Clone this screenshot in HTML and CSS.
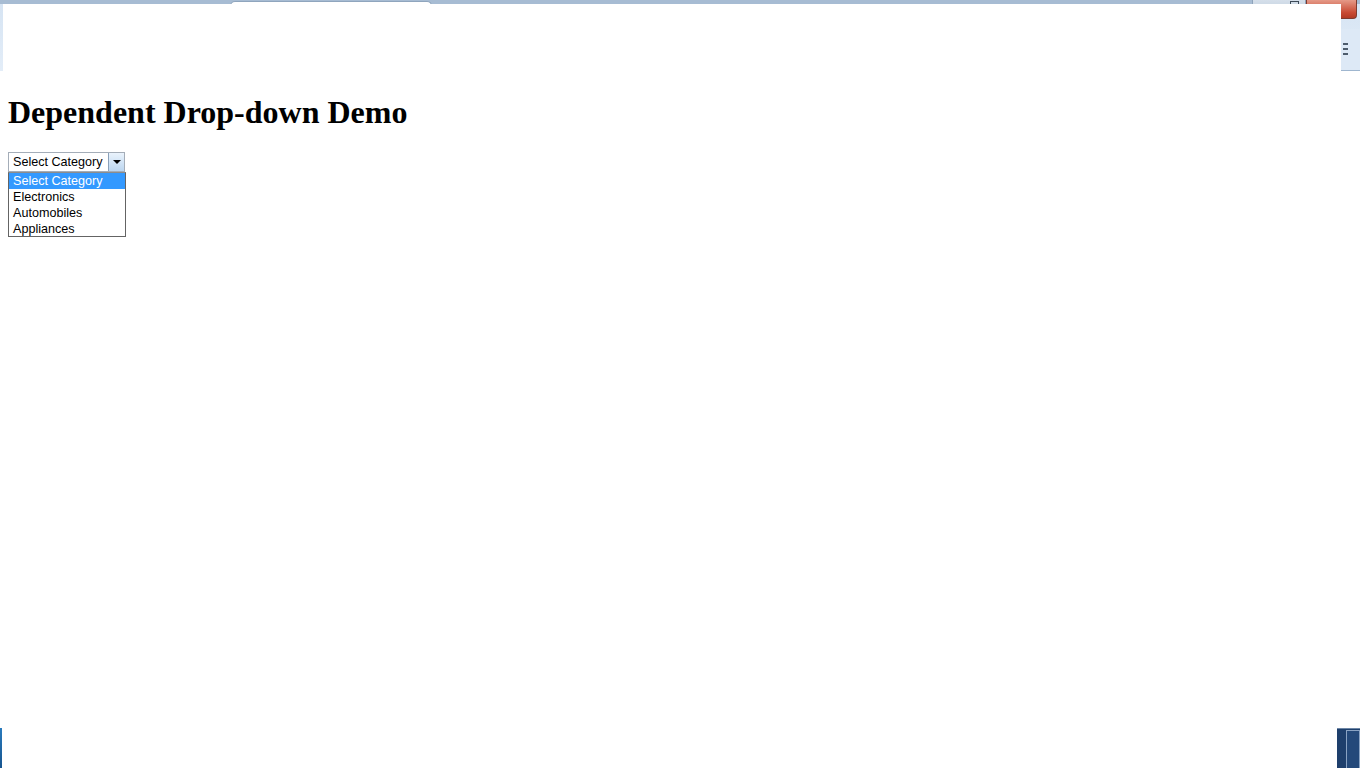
FILE: index.html
```html
<!DOCTYPE html>
<html lang="en">
<head>
  <meta charset="UTF-8">
  <title>Dependent Drop-down Demo</title>
  <link rel="stylesheet" href="styles.css">
</head>
<body>
  <div class="chrome">
    <div class="tab"></div>
    <div class="win-buttons">
      <div class="btn-max"><span class="box"></span></div>
      <div class="btn-close"></div>
    </div>
    <div class="toolbar"></div>
    <div class="side">
      <div class="menu-icon"><span></span><span></span><span></span></div>
    </div>
  </div>

  <div class="page">
    <h1>Dependent Drop-down Demo</h1>

    <div class="select-wrap">
      <div class="select">
        <span class="select-value">Select Category</span>
        <span class="select-arrow"></span>
      </div>
      <ul class="select-list">
        <li class="selected">Select Category</li>
        <li>Electronics</li>
        <li>Automobiles</li>
        <li>Appliances</li>
      </ul>
    </div>
  </div>

  <div class="taskbar-left"></div>
  <div class="taskbar-right"><span></span></div>
</body>
</html>
```

FILE: styles.css
```css
html, body {
  height: 100%;
}

body {
  margin: 0;
  background-color: #fff;
  font-family: 'Liberation Serif', 'Times New Roman', serif;
  overflow: hidden;
  position: relative;
}

.chrome {
  position: relative;
  height: 71px;
  background: linear-gradient(to bottom, #a7bcd3 0, #a7bcd3 4px, #d6e4f3 4px, #e3edf8 100%);
}

.toolbar {
  position: absolute;
  left: 3px;
  top: 4px;
  width: 1338px;
  height: 67px;
  background-color: #fff;
}

.tab {
  position: absolute;
  left: 230px;
  top: 1px;
  width: 200px;
  height: 6px;
  background-color: #fff;
  border: 1px solid #8fa5bd;
  border-bottom: none;
  border-radius: 5px 5px 0 0;
}

.win-buttons {
  position: absolute;
  right: 3px;
  top: 0;
  display: flex;
}

.btn-max {
  position: relative;
  width: 52px;
  height: 18px;
  background: linear-gradient(to bottom, #d5dfea, #b9c9da);
  border: 1px solid #8ea3ba;
  border-top: none;
  border-radius: 0 0 0 3px;
}

.btn-max .box {
  position: absolute;
  left: 37px;
  top: 1px;
  width: 7px;
  height: 6px;
  border: 1px solid #3d4a58;
}

.btn-close {
  width: 49px;
  height: 18px;
  background: linear-gradient(to bottom, #e59a88, #c84a33 70%, #b23a24);
  border: 1px solid #7d3b2f;
  border-top: none;
  border-radius: 0 0 4px 0;
}

.side {
  position: absolute;
  left: 1341px;
  top: 29px;
  width: 19px;
  height: 41px;
  background-color: #dde9f6;
  border-bottom: 1px solid #9fb6cf;
}

.menu-icon {
  display: flex;
  flex-direction: column;
  gap: 3px;
  margin: 14px 0 0 2px;
}

.menu-icon span {
  display: block;
  width: 5px;
  height: 2px;
  background-color: #4d5c6c;
}

.page {
  margin: 8px;
}

h1 {
  font-size: 32px;
  font-weight: bold;
  margin: 22.5px 0 21.44px;
  color: #000;
}

.select-wrap {
  font-family: 'Liberation Sans', Arial, sans-serif;
  font-size: 12.6px;
  color: #000;
  width: 118px;
}

.select {
  display: flex;
  align-items: stretch;
  box-sizing: border-box;
  width: 117px;
  height: 20px;
  border: 1px solid #a4adb8;
  background-color: #fff;
}

.select-value {
  flex: 1;
  padding-left: 4px;
  line-height: 18px;
  white-space: nowrap;
}

.select-arrow {
  position: relative;
  width: 15px;
  border-left: 1px solid #8aa0b9;
  background: linear-gradient(to bottom, #eaf3fc, #bcd6f0);
}

.select-arrow::after {
  content: '';
  position: absolute;
  left: 4px;
  top: 7px;
  border-left: 4px solid transparent;
  border-right: 4px solid transparent;
  border-top: 4px solid #000;
}

.select-list {
  list-style: none;
  margin: 0;
  padding: 0;
  box-sizing: border-box;
  width: 118px;
  height: 65px;
  border: 1px solid #646464;
  border-top-color: #8c8c8c;
  background-color: #fff;
  overflow: hidden;
}

.select-list li {
  height: 16px;
  line-height: 16px;
  padding-left: 4px;
  white-space: nowrap;
}

.select-list li.selected {
  background-color: #3399ff;
  color: #fff;
}

.taskbar-left {
  position: absolute;
  left: 0;
  bottom: 0;
  width: 2px;
  height: 40px;
  background: linear-gradient(to bottom, #2a7bbd, #17558f);
}

.taskbar-right {
  position: absolute;
  right: 0;
  bottom: 0;
  width: 23px;
  height: 40px;
  background-color: #1e3f6c;
  border-top: 1px solid #6d86a6;
  box-sizing: border-box;
}

.taskbar-right span {
  position: absolute;
  left: 9px;
  top: 1px;
  width: 12px;
  height: 37px;
  border: 1px solid #8aa3c3;
  background-color: #24497a;
}
```
